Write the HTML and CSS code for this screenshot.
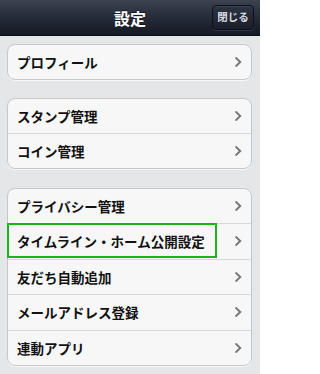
FILE: index.html
```html
<!DOCTYPE html>
<html lang="ja">
<head>
<meta charset="utf-8">
<title>設定</title>
<link rel="stylesheet" href="styles.css">
</head>
<body>
<div class="phone">
  <header class="navbar">
    <h1 class="title">設定</h1>
    <button class="close-btn">閉じる</button>
  </header>
  <main class="content">
    <ul class="group">
      <li class="row"><span class="label">プロフィール</span><svg class="chev" viewBox="0 0 7 10"><polyline points="1.3,1.2 5.2,5 1.3,8.8"/></svg></li>
    </ul>
    <ul class="group">
      <li class="row"><span class="label">スタンプ管理</span><svg class="chev" viewBox="0 0 7 10"><polyline points="1.3,1.2 5.2,5 1.3,8.8"/></svg></li>
      <li class="row"><span class="label">コイン管理</span><svg class="chev" viewBox="0 0 7 10"><polyline points="1.3,1.2 5.2,5 1.3,8.8"/></svg></li>
    </ul>
    <ul class="group last">
      <li class="row"><span class="label">プライバシー管理</span><svg class="chev" viewBox="0 0 7 10"><polyline points="1.3,1.2 5.2,5 1.3,8.8"/></svg></li>
      <li class="row"><span class="highlight"></span><span class="label">タイムライン・ホーム公開設定</span><svg class="chev" viewBox="0 0 7 10"><polyline points="1.3,1.2 5.2,5 1.3,8.8"/></svg></li>
      <li class="row"><span class="label">友だち自動追加</span><svg class="chev" viewBox="0 0 7 10"><polyline points="1.3,1.2 5.2,5 1.3,8.8"/></svg></li>
      <li class="row"><span class="label">メールアドレス登録</span><svg class="chev" viewBox="0 0 7 10"><polyline points="1.3,1.2 5.2,5 1.3,8.8"/></svg></li>
      <li class="row"><span class="label">連動アプリ</span><svg class="chev" viewBox="0 0 7 10"><polyline points="1.3,1.2 5.2,5 1.3,8.8"/></svg></li>
    </ul>
  </main>
</div>
</body>
</html>
```

FILE: styles.css
```css
* { box-sizing: border-box; }
html, body {
  margin: 0;
  padding: 0;
  background: #ffffff;
  font-family: "Noto Sans CJK JP", "Noto Sans", sans-serif;
}
.phone {
  width: 260px;
  height: 374px;
  background: #e5e6e8;
  overflow: hidden;
}
.navbar {
  position: relative;
  height: 36px;
  background: linear-gradient(to bottom, #3c4250 0%, #252b38 50%, #141923 100%);
  border-bottom: 1px solid #0b0e14;
  display: flex;
  align-items: center;
  justify-content: center;
}
.title {
  margin: 0;
  color: #ffffff;
  font-size: 16px;
  font-weight: 700;
  line-height: 1;
  text-shadow: 0 -1px 0 rgba(0,0,0,0.5);
}
.close-btn {
  position: absolute;
  right: 6px;
  top: 5px;
  width: 42px;
  height: 25px;
  padding: 0;
  border: 1px solid #0c1018;
  border-radius: 4px;
  background: linear-gradient(to bottom, #2c3341, #1a1f2a);
  box-shadow: inset 0 1px 0 rgba(255,255,255,0.08), 0 1px 0 rgba(255,255,255,0.12);
  color: #d8dbe0;
  font-family: "Noto Sans CJK JP", sans-serif;
  font-size: 10.5px;
  font-weight: 700;
  line-height: 1;
}
.content {
  padding: 8px 8px 0 7px;
  display: flex;
  flex-direction: column;
  gap: 18px;
}
.group {
  list-style: none;
  margin: 0;
  padding: 0;
  background: #f7f7f7;
  border: 1px solid #c6c7c9;
  border-radius: 8px;
  box-shadow: 0 1px 0 rgba(255,255,255,0.7);
}
.group.last { margin-top: 1px; }
.row {
  position: relative;
  height: 34px;
  display: flex;
  align-items: center;
  justify-content: space-between;
  padding: 0 9px 0 9px;
}
.row + .row {
  border-top: 1px solid #d6d7d9;
  height: 35px;
}
.group.last .row + .row { height: 35.5px; }
.label {
  font-size: 13.5px;
  font-weight: 700;
  color: #111111;
  letter-spacing: 0;
}
.chev {
  width: 7px;
  height: 10px;
  fill: none;
  stroke: #777777;
  stroke-width: 2;
  stroke-linecap: square;
}
.highlight {
  position: absolute;
  left: -1px;
  top: -1px;
  width: 210px;
  height: 35px;
  border: 2px solid #16b616;
  pointer-events: none;
}
```
